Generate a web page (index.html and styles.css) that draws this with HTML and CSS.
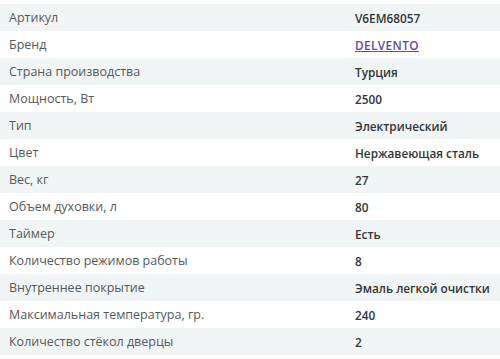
FILE: index.html
```html
<!DOCTYPE html>
<html lang="ru">
<head>
<meta charset="utf-8">
<link rel="stylesheet" href="styles.css">
</head>
<body>
<div class="specs">
  <div class="row shade"><div class="label">Артикул</div><div class="value">V6EM68057</div></div>
  <div class="row"><div class="label">Бренд</div><div class="value"><a class="brand" href="#">DELVENTO</a></div></div>
  <div class="row shade"><div class="label">Страна производства</div><div class="value">Турция</div></div>
  <div class="row"><div class="label">Мощность, Вт</div><div class="value">2500</div></div>
  <div class="row shade"><div class="label">Тип</div><div class="value">Электрический</div></div>
  <div class="row"><div class="label">Цвет</div><div class="value">Нержавеющая сталь</div></div>
  <div class="row shade"><div class="label">Вес, кг</div><div class="value">27</div></div>
  <div class="row"><div class="label">Объем духовки, л</div><div class="value">80</div></div>
  <div class="row shade"><div class="label">Таймер</div><div class="value">Есть</div></div>
  <div class="row"><div class="label">Количество режимов работы</div><div class="value">8</div></div>
  <div class="row shade"><div class="label">Внутреннее покрытие</div><div class="value">Эмаль легкой очистки</div></div>
  <div class="row"><div class="label">Максимальная температура, гр.</div><div class="value">240</div></div>
  <div class="row shade"><div class="label">Количество стёкол дверцы</div><div class="value">2</div></div>
</div>
</body>
</html>
```
FILE: styles.css
```css
html, body {
  margin: 0;
  padding: 0;
  background: #ffffff;
}
body {
  font-family: "Open Sans", "Noto Sans", sans-serif;
  padding-top: 4px;
}
.specs {
  display: flex;
  flex-direction: column;
}
.row {
  display: grid;
  grid-template-columns: 355px 1fr;
  height: 27px;
  align-items: center;
}
.shade {
  background: #f1f5f6;
}
.label {
  padding-left: 9px;
  font-size: 12.5px;
  color: #555a5c;
}
.value {
  font-size: 11.8px;
  font-weight: 600;
  color: #333638;
}
.brand {
  color: #6b46a8;
  text-decoration: underline;
  letter-spacing: 0.4px;
}
```
